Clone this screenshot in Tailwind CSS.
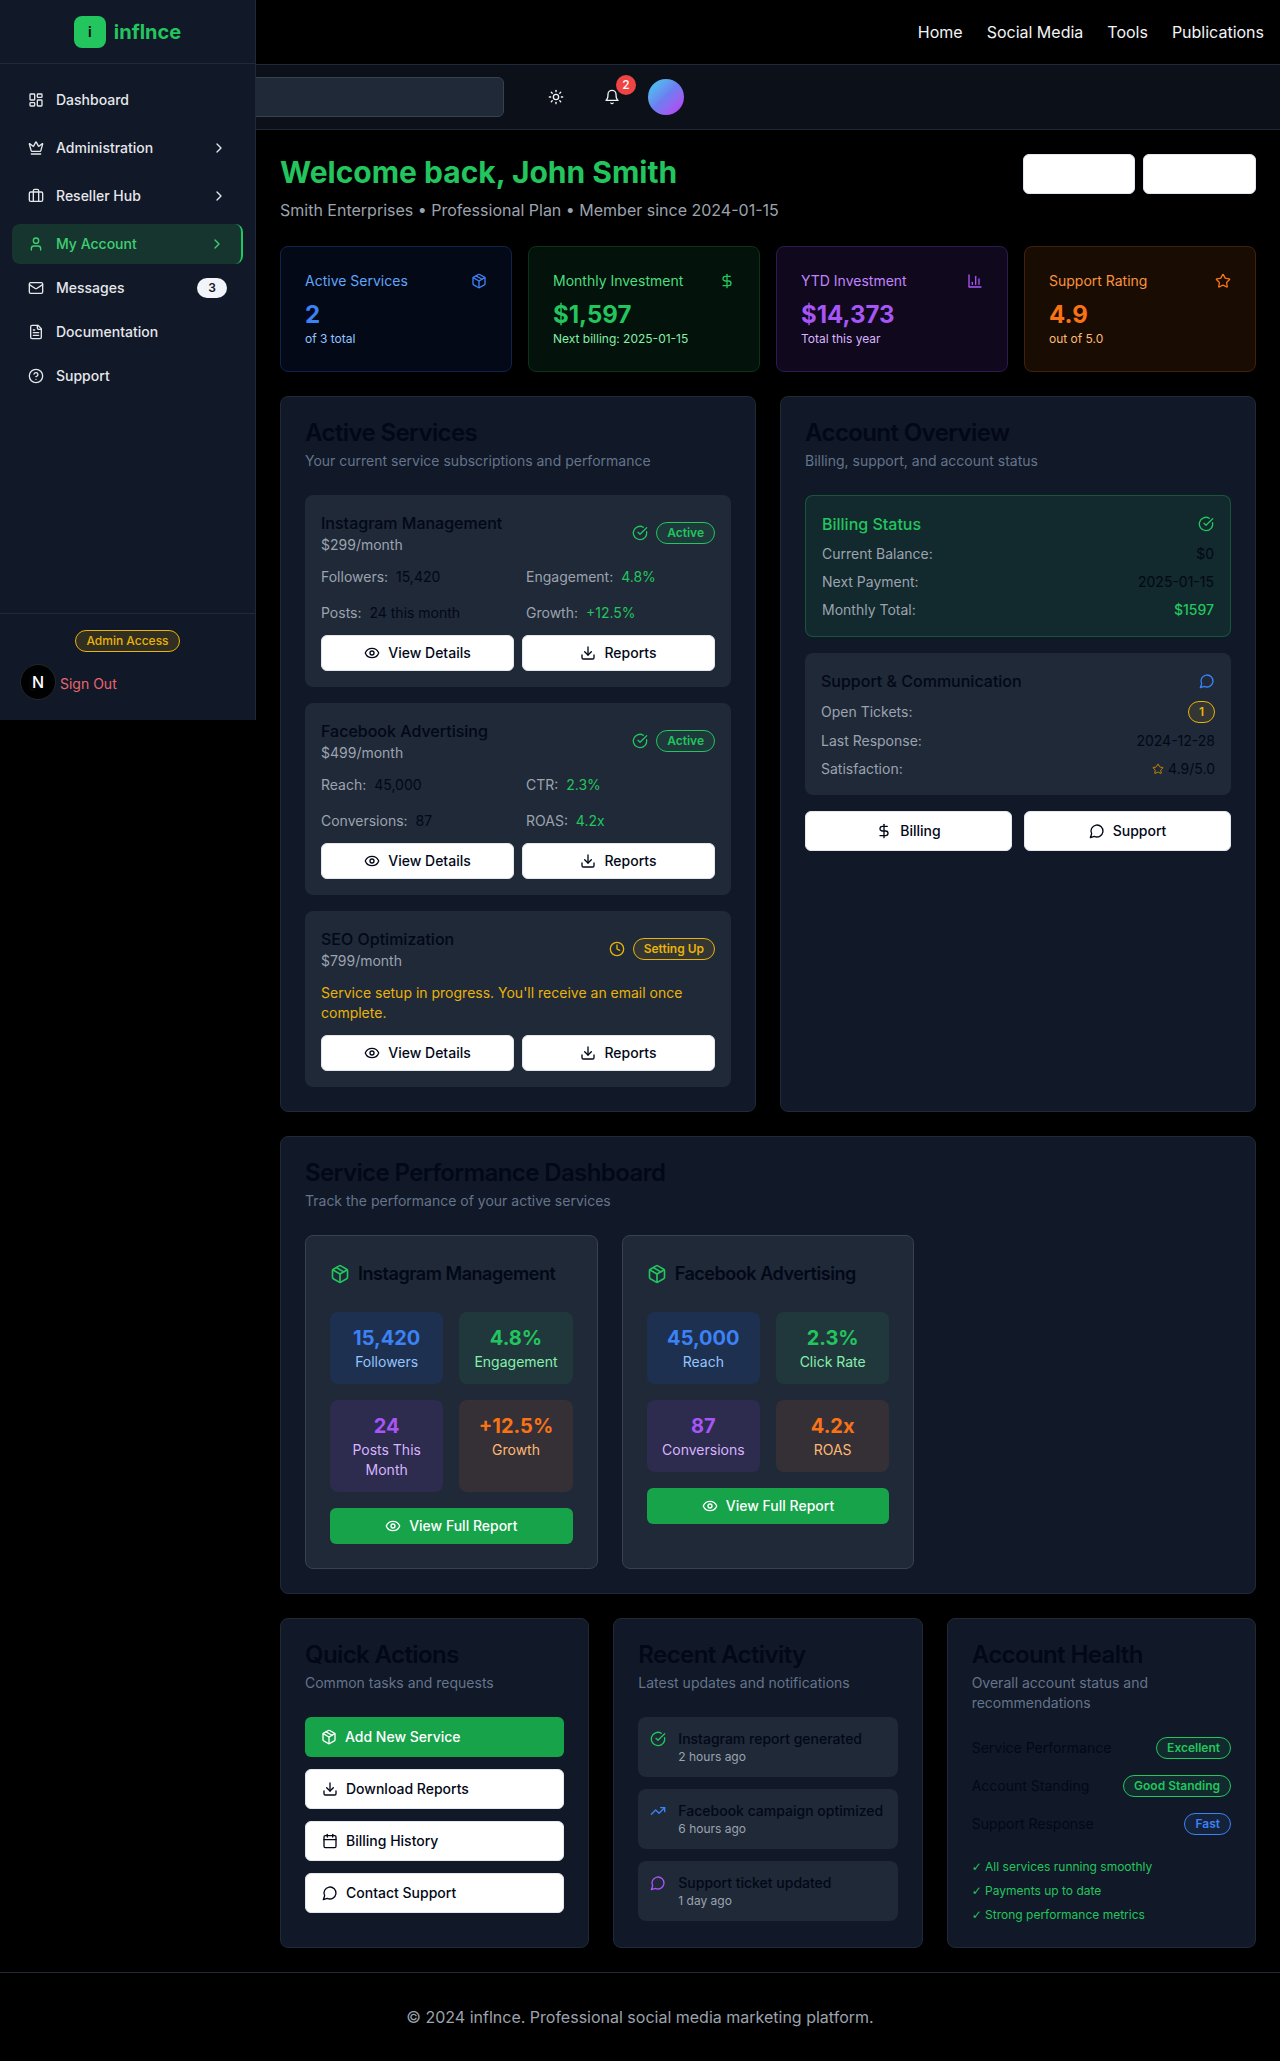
<!DOCTYPE html>
<html lang="en">
<head>
  <meta charset="UTF-8">
  <meta name="viewport" content="width=device-width, initial-scale=1.0">
  <title>inflnce - My Account</title>
  <script src="https://cdn.jsdelivr.net/npm/@tailwindcss/browser@4"></script>
</head>
<body class="bg-black font-['Inter',sans-serif] text-[#f3f4f6] relative min-h-screen">

  <!-- icon sprite -->
  <svg class="hidden" xmlns="http://www.w3.org/2000/svg">
    <symbol id="i-dash" viewBox="0 0 24 24"><rect width="7" height="9" x="3" y="3" rx="1"/><rect width="7" height="5" x="14" y="3" rx="1"/><rect width="7" height="9" x="14" y="12" rx="1"/><rect width="7" height="5" x="3" y="16" rx="1"/></symbol>
    <symbol id="i-crown" viewBox="0 0 24 24"><path d="M11.562 3.266a.5.5 0 0 1 .876 0L15.39 8.87a1 1 0 0 0 1.516.294L21.183 5.5a.5.5 0 0 1 .798.519l-2.834 10.246a1 1 0 0 1-.956.734H5.81a1 1 0 0 1-.957-.734L2.02 6.02a.5.5 0 0 1 .798-.519l4.276 3.664a1 1 0 0 0 1.516-.294z"/><path d="M5 21h14"/></symbol>
    <symbol id="i-case" viewBox="0 0 24 24"><rect width="20" height="14" x="2" y="6" rx="2"/><path d="M16 20V4a2 2 0 0 0-2-2h-4a2 2 0 0 0-2 2v16"/></symbol>
    <symbol id="i-user" viewBox="0 0 24 24"><path d="M19 21v-2a4 4 0 0 0-4-4H9a4 4 0 0 0-4 4v2"/><circle cx="12" cy="7" r="4"/></symbol>
    <symbol id="i-mail" viewBox="0 0 24 24"><rect width="20" height="16" x="2" y="4" rx="2"/><path d="m22 7-8.97 5.7a1.94 1.94 0 0 1-2.06 0L2 7"/></symbol>
    <symbol id="i-file" viewBox="0 0 24 24"><path d="M15 2H6a2 2 0 0 0-2 2v16a2 2 0 0 0 2 2h12a2 2 0 0 0 2-2V7Z"/><path d="M14 2v4a2 2 0 0 0 2 2h4"/><path d="M10 9H8"/><path d="M16 13H8"/><path d="M16 17H8"/></symbol>
    <symbol id="i-help" viewBox="0 0 24 24"><circle cx="12" cy="12" r="10"/><path d="M9.09 9a3 3 0 0 1 5.83 1c0 2-3 3-3 3"/><path d="M12 17h.01"/></symbol>
    <symbol id="i-chev" viewBox="0 0 24 24"><path d="m9 18 6-6-6-6"/></symbol>
    <symbol id="i-sun" viewBox="0 0 24 24"><circle cx="12" cy="12" r="4"/><path d="M12 2v2"/><path d="M12 20v2"/><path d="m4.93 4.93 1.41 1.41"/><path d="m17.66 17.66 1.41 1.41"/><path d="M2 12h2"/><path d="M20 12h2"/><path d="m6.34 17.66-1.41 1.41"/><path d="m19.07 4.93-1.41 1.41"/></symbol>
    <symbol id="i-bell" viewBox="0 0 24 24"><path d="M6 8a6 6 0 0 1 12 0c0 7 3 9 3 9H3s3-2 3-9"/><path d="M10.3 21a1.94 1.94 0 0 0 3.4 0"/></symbol>
    <symbol id="i-pkg" viewBox="0 0 24 24"><path d="m7.5 4.27 9 5.15"/><path d="M21 8a2 2 0 0 0-1-1.73l-7-4a2 2 0 0 0-2 0l-7 4A2 2 0 0 0 3 8v8a2 2 0 0 0 1 1.73l7 4a2 2 0 0 0 2 0l7-4A2 2 0 0 0 21 16Z"/><path d="m3.3 7 8.7 5 8.7-5"/><path d="M12 22V12"/></symbol>
    <symbol id="i-dollar" viewBox="0 0 24 24"><path d="M12 2v20"/><path d="M17 5H9.5a3.5 3.5 0 0 0 0 7h5a3.5 3.5 0 0 1 0 7H6"/></symbol>
    <symbol id="i-bars" viewBox="0 0 24 24"><path d="M3 3v18h18"/><path d="M18 17V9"/><path d="M13 17V5"/><path d="M8 17v-3"/></symbol>
    <symbol id="i-star" viewBox="0 0 24 24"><path d="M11.525 2.295a.53.53 0 0 1 .95 0l2.31 4.679a2.123 2.123 0 0 0 1.595 1.16l5.166.756a.53.53 0 0 1 .294.904l-3.736 3.638a2.123 2.123 0 0 0-.611 1.878l.882 5.14a.53.53 0 0 1-.771.56l-4.618-2.428a2.122 2.122 0 0 0-1.973 0L6.396 21.01a.53.53 0 0 1-.77-.56l.881-5.139a2.122 2.122 0 0 0-.611-1.879L2.16 9.795a.53.53 0 0 1 .294-.906l5.165-.755a2.122 2.122 0 0 0 1.597-1.16z"/></symbol>
    <symbol id="i-check" viewBox="0 0 24 24"><path d="M21.801 10A10 10 0 1 1 17 3.335"/><path d="m9 11 3 3L22 4"/></symbol>
    <symbol id="i-eye" viewBox="0 0 24 24"><path d="M2.062 12.348a1 1 0 0 1 0-.696 10.75 10.75 0 0 1 19.876 0 1 1 0 0 1 0 .696 10.75 10.75 0 0 1-19.876 0"/><circle cx="12" cy="12" r="3"/></symbol>
    <symbol id="i-down" viewBox="0 0 24 24"><path d="M21 15v4a2 2 0 0 1-2 2H5a2 2 0 0 1-2-2v-4"/><path d="m7 10 5 5 5-5"/><path d="M12 15V3"/></symbol>
    <symbol id="i-clock" viewBox="0 0 24 24"><circle cx="12" cy="12" r="10"/><path d="M12 6v6l4 2"/></symbol>
    <symbol id="i-msg" viewBox="0 0 24 24"><path d="M7.9 20A9 9 0 1 0 4 16.1L2 22Z"/></symbol>
    <symbol id="i-cal" viewBox="0 0 24 24"><path d="M8 2v4"/><path d="M16 2v4"/><rect width="18" height="18" x="3" y="4" rx="2"/><path d="M3 10h18"/></symbol>
    <symbol id="i-trend" viewBox="0 0 24 24"><path d="M22 7 13.5 15.5 8.5 10.5 2 17"/><path d="M16 7h6v6"/></symbol>
    <symbol id="i-out" viewBox="0 0 24 24"><path d="M9 21H5a2 2 0 0 1-2-2V5a2 2 0 0 1 2-2h4"/><path d="m16 17 5-5-5-5"/><path d="M21 12H9"/></symbol>
  </svg>

  <!-- Sidebar -->
  <aside class="absolute top-0 left-0 z-20 w-64 h-[720px] bg-[#111827] border-r border-[#1f2937] flex flex-col">
    <div class="h-16 border-b border-[#1f2937] flex items-center justify-center gap-2 shrink-0">
      <div class="w-8 h-8 rounded-lg bg-[#22c55e] flex items-center justify-center text-sm font-semibold text-black">i</div>
      <span class="text-xl font-bold text-[#22c55e]">inflnce</span>
    </div>
    <nav class="flex-1 px-3 pt-4 text-sm font-medium text-[#e5e7eb]">
      <a class="h-10 mb-2 px-4 flex items-center gap-3"><svg class="w-4 h-4 fill-none stroke-current stroke-2 [stroke-linecap:round] [stroke-linejoin:round]"><use href="#i-dash"/></svg>Dashboard</a>
      <a class="h-10 mb-2 px-4 flex items-center gap-3"><svg class="w-4 h-4 fill-none stroke-current stroke-2 [stroke-linecap:round] [stroke-linejoin:round]"><use href="#i-crown"/></svg><span class="flex-1">Administration</span><svg class="w-4 h-4 fill-none stroke-current stroke-2 [stroke-linecap:round] [stroke-linejoin:round]"><use href="#i-chev"/></svg></a>
      <a class="h-10 mb-2 px-4 flex items-center gap-3"><svg class="w-4 h-4 fill-none stroke-current stroke-2 [stroke-linecap:round] [stroke-linejoin:round]"><use href="#i-case"/></svg><span class="flex-1">Reseller Hub</span><svg class="w-4 h-4 fill-none stroke-current stroke-2 [stroke-linecap:round] [stroke-linejoin:round]"><use href="#i-chev"/></svg></a>
      <a class="h-10 mb-1 px-4 flex items-center gap-3 rounded-lg bg-[#17352f] text-[#3ecf72] border-r-2 border-[#22c55e]"><svg class="w-4 h-4 fill-none stroke-current stroke-2 [stroke-linecap:round] [stroke-linejoin:round]"><use href="#i-user"/></svg><span class="flex-1">My Account</span><svg class="w-4 h-4 fill-none stroke-current stroke-2 [stroke-linecap:round] [stroke-linejoin:round]"><use href="#i-chev"/></svg></a>
      <a class="h-10 mb-1 px-4 flex items-center gap-3"><svg class="w-4 h-4 fill-none stroke-current stroke-2 [stroke-linecap:round] [stroke-linejoin:round]"><use href="#i-mail"/></svg><span class="flex-1">Messages</span><span class="h-5 w-[30px] rounded-full bg-[#f1f5f9] text-[#0f172a] text-xs font-semibold flex items-center justify-center">3</span></a>
      <a class="h-10 mb-1 px-4 flex items-center gap-3"><svg class="w-4 h-4 fill-none stroke-current stroke-2 [stroke-linecap:round] [stroke-linejoin:round]"><use href="#i-file"/></svg>Documentation</a>
      <a class="h-10 mb-1 px-4 flex items-center gap-3"><svg class="w-4 h-4 fill-none stroke-current stroke-2 [stroke-linecap:round] [stroke-linejoin:round]"><use href="#i-help"/></svg>Support</a>
    </nav>
    <div class="border-t border-[#1f2937] px-3 pt-4 pb-4">
      <div class="flex justify-center mb-3">
        <span class="h-[22px] px-2.5 rounded-full border border-[#eab308] bg-[#eab308]/15 text-[#eab308] text-xs font-medium flex items-center">Admin Access</span>
      </div>
      <a class="h-10 px-4 flex items-center gap-4 text-sm text-[#e8666f]"><svg class="w-4 h-4 fill-none stroke-current stroke-2 [stroke-linecap:round] [stroke-linejoin:round]"><use href="#i-out"/></svg>Sign Out</a>
    </div>
    <!-- dev indicator sits over the sign out icon -->
    <div class="absolute left-5 bottom-5 w-9 h-9 rounded-full bg-black/95 border border-[#262626] flex items-center justify-center text-white text-base font-medium">N</div>
  </aside>

  <!-- Top nav -->
  <header class="h-[65px] bg-black border-b border-[#1f2937] flex items-center justify-end gap-6 pr-4 text-base text-[#f3f4f6]">
    <a>Home</a><a>Social Media</a><a>Tools</a><a>Publications</a>
  </header>

  <!-- Search bar -->
  <div class="h-[65px] bg-[#0b1019] border-b border-[#1f2937] flex items-center">
    <div class="ml-[120px] w-[384px] h-10 rounded-md bg-[#1f2937] border border-[#374151]"></div>
    <div class="ml-8 w-10 h-10 flex items-center justify-center"><svg class="w-4 h-4 fill-none stroke-current stroke-2 [stroke-linecap:round] [stroke-linejoin:round]"><use href="#i-sun"/></svg></div>
    <div class="ml-4 relative w-10 h-10 flex items-center justify-center">
      <svg class="w-4 h-4 fill-none stroke-current stroke-2 [stroke-linecap:round] [stroke-linejoin:round]"><use href="#i-bell"/></svg>
      <span class="absolute -top-0.5 -right-1 w-5 h-5 rounded-full bg-[#ef4444] text-white text-xs font-medium flex items-center justify-center">2</span>
    </div>
    <div class="ml-4 w-9 h-9 rounded-full bg-gradient-to-br from-[#22d3ee] via-[#6d7cf0] to-[#c026f3]"></div>
  </div>

  <main class="pl-[280px] pr-6 pt-6 pb-6 flex flex-col gap-6">
    <!-- Welcome -->
    <div class="flex justify-between items-start">
      <div>
        <h1 class="text-3xl font-bold text-[#22c55e]">Welcome back, John Smith</h1>
        <p class="mt-2 text-base text-[#9ca3af]">Smith Enterprises • Professional Plan • Member since 2024-01-15</p>
      </div>
      <div class="flex gap-2">
        <button class="w-[112px] h-10 rounded-md bg-white border border-[#e2e8f0]"></button>
        <button class="w-[113px] h-10 rounded-md bg-white border border-[#e2e8f0]"></button>
      </div>
    </div>

    <!-- Stat cards -->
    <div class="grid grid-cols-4 gap-4">
      <div class="rounded-lg border border-[#12234a] bg-[#030917] p-6">
        <div class="flex justify-between items-center mb-2"><span class="text-sm text-[#60a5fa]">Active Services</span><svg class="w-4 h-4 text-[#3b82f6] fill-none stroke-current stroke-2 [stroke-linecap:round] [stroke-linejoin:round]"><use href="#i-pkg"/></svg></div>
        <div class="text-2xl font-bold text-[#3b82f6]">2</div>
        <div class="text-xs text-[#93c5fd]">of 3 total</div>
      </div>
      <div class="rounded-lg border border-[#0b3317] bg-[#03120a] p-6">
        <div class="flex justify-between items-center mb-2"><span class="text-sm text-[#4ade80]">Monthly Investment</span><svg class="w-4 h-4 text-[#22c55e] fill-none stroke-current stroke-2 [stroke-linecap:round] [stroke-linejoin:round]"><use href="#i-dollar"/></svg></div>
        <div class="text-2xl font-bold text-[#22c55e]">$1,597</div>
        <div class="text-xs text-[#86efac]">Next billing: 2025-01-15</div>
      </div>
      <div class="rounded-lg border border-[#2d1a4f] bg-[#10081c] p-6">
        <div class="flex justify-between items-center mb-2"><span class="text-sm text-[#c084fc]">YTD Investment</span><svg class="w-4 h-4 text-[#a855f7] fill-none stroke-current stroke-2 [stroke-linecap:round] [stroke-linejoin:round]"><use href="#i-bars"/></svg></div>
        <div class="text-2xl font-bold text-[#a855f7]">$14,373</div>
        <div class="text-xs text-[#d8b4fe]">Total this year</div>
      </div>
      <div class="rounded-lg border border-[#43200a] bg-[#190d03] p-6">
        <div class="flex justify-between items-center mb-2"><span class="text-sm text-[#fb923c]">Support Rating</span><svg class="w-4 h-4 text-[#f97316] fill-none stroke-current stroke-2 [stroke-linecap:round] [stroke-linejoin:round]"><use href="#i-star"/></svg></div>
        <div class="text-2xl font-bold text-[#f97316]">4.9</div>
        <div class="text-xs text-[#fdba74]">out of 5.0</div>
      </div>
    </div>

    <!-- Services + overview -->
    <div class="grid grid-cols-2 gap-6">
      <section class="rounded-lg border border-[#1f2937] bg-[#111827] p-6">
        <h2 class="text-2xl leading-none font-semibold tracking-tight text-[#020817]">Active Services</h2>
        <p class="mt-1.5 mb-6 text-sm text-[#64748b]">Your current service subscriptions and performance</p>
        <div class="flex flex-col gap-4">
          <div class="rounded-lg bg-[#1f2937] p-4">
            <div class="flex justify-between items-center mb-3">
              <div><h3 class="text-base font-medium text-[#020817]">Instagram Management</h3><p class="text-sm text-[#9ca3af]">$299/month</p></div>
              <div class="flex items-center gap-2"><svg class="w-4 h-4 text-[#22c55e] fill-none stroke-current stroke-2 [stroke-linecap:round] [stroke-linejoin:round]"><use href="#i-check"/></svg><span class="h-[22px] px-2.5 rounded-full border border-[#22c55e] bg-[#22c55e]/10 text-[#22c55e] text-xs font-semibold flex items-center">Active</span></div>
            </div>
            <div class="grid grid-cols-2 gap-4 mb-3 text-sm text-[#9ca3af]">
              <div>Followers: <span class="ml-1 text-[#020817]">15,420</span></div>
              <div>Engagement: <span class="ml-1 text-[#22c55e]">4.8%</span></div>
              <div>Posts: <span class="ml-1 text-[#020817]">24 this month</span></div>
              <div>Growth: <span class="ml-1 text-[#22c55e]">+12.5%</span></div>
            </div>
            <div class="grid grid-cols-2 gap-2 text-sm font-medium text-[#020817]">
              <button class="h-9 rounded-md bg-white border border-[#e2e8f0] flex items-center justify-center gap-2"><svg class="w-4 h-4 fill-none stroke-current stroke-2 [stroke-linecap:round] [stroke-linejoin:round]"><use href="#i-eye"/></svg>View Details</button>
              <button class="h-9 rounded-md bg-white border border-[#e2e8f0] flex items-center justify-center gap-2"><svg class="w-4 h-4 fill-none stroke-current stroke-2 [stroke-linecap:round] [stroke-linejoin:round]"><use href="#i-down"/></svg>Reports</button>
            </div>
          </div>
          <div class="rounded-lg bg-[#1f2937] p-4">
            <div class="flex justify-between items-center mb-3">
              <div><h3 class="text-base font-medium text-[#020817]">Facebook Advertising</h3><p class="text-sm text-[#9ca3af]">$499/month</p></div>
              <div class="flex items-center gap-2"><svg class="w-4 h-4 text-[#22c55e] fill-none stroke-current stroke-2 [stroke-linecap:round] [stroke-linejoin:round]"><use href="#i-check"/></svg><span class="h-[22px] px-2.5 rounded-full border border-[#22c55e] bg-[#22c55e]/10 text-[#22c55e] text-xs font-semibold flex items-center">Active</span></div>
            </div>
            <div class="grid grid-cols-2 gap-4 mb-3 text-sm text-[#9ca3af]">
              <div>Reach: <span class="ml-1 text-[#020817]">45,000</span></div>
              <div>CTR: <span class="ml-1 text-[#22c55e]">2.3%</span></div>
              <div>Conversions: <span class="ml-1 text-[#020817]">87</span></div>
              <div>ROAS: <span class="ml-1 text-[#22c55e]">4.2x</span></div>
            </div>
            <div class="grid grid-cols-2 gap-2 text-sm font-medium text-[#020817]">
              <button class="h-9 rounded-md bg-white border border-[#e2e8f0] flex items-center justify-center gap-2"><svg class="w-4 h-4 fill-none stroke-current stroke-2 [stroke-linecap:round] [stroke-linejoin:round]"><use href="#i-eye"/></svg>View Details</button>
              <button class="h-9 rounded-md bg-white border border-[#e2e8f0] flex items-center justify-center gap-2"><svg class="w-4 h-4 fill-none stroke-current stroke-2 [stroke-linecap:round] [stroke-linejoin:round]"><use href="#i-down"/></svg>Reports</button>
            </div>
          </div>
          <div class="rounded-lg bg-[#1f2937] p-4">
            <div class="flex justify-between items-center mb-3">
              <div><h3 class="text-base font-medium text-[#020817]">SEO Optimization</h3><p class="text-sm text-[#9ca3af]">$799/month</p></div>
              <div class="flex items-center gap-2"><svg class="w-4 h-4 text-[#eab308] fill-none stroke-current stroke-2 [stroke-linecap:round] [stroke-linejoin:round]"><use href="#i-clock"/></svg><span class="h-[22px] px-2.5 rounded-full border border-[#eab308] bg-[#eab308]/10 text-[#eab308] text-xs font-semibold flex items-center">Setting Up</span></div>
            </div>
            <p class="mb-3 text-sm text-[#eab308]">Service setup in progress. You'll receive an email once complete.</p>
            <div class="grid grid-cols-2 gap-2 text-sm font-medium text-[#020817]">
              <button class="h-9 rounded-md bg-white border border-[#e2e8f0] flex items-center justify-center gap-2"><svg class="w-4 h-4 fill-none stroke-current stroke-2 [stroke-linecap:round] [stroke-linejoin:round]"><use href="#i-eye"/></svg>View Details</button>
              <button class="h-9 rounded-md bg-white border border-[#e2e8f0] flex items-center justify-center gap-2"><svg class="w-4 h-4 fill-none stroke-current stroke-2 [stroke-linecap:round] [stroke-linejoin:round]"><use href="#i-down"/></svg>Reports</button>
            </div>
          </div>
        </div>
      </section>

      <section class="rounded-lg border border-[#1f2937] bg-[#111827] p-6">
        <h2 class="text-2xl leading-none font-semibold tracking-tight text-[#020817]">Account Overview</h2>
        <p class="mt-1.5 mb-6 text-sm text-[#64748b]">Billing, support, and account status</p>
        <div class="flex flex-col gap-4">
          <div class="rounded-lg border border-[#22c55e]/30 bg-[#22c55e]/10 p-4">
            <div class="flex justify-between items-center mb-2"><h3 class="text-base font-medium text-[#22c55e]">Billing Status</h3><svg class="w-4 h-4 text-[#22c55e] fill-none stroke-current stroke-2 [stroke-linecap:round] [stroke-linejoin:round]"><use href="#i-check"/></svg></div>
            <div class="flex flex-col gap-2 text-sm text-[#9ca3af]">
              <div class="flex justify-between"><span>Current Balance:</span><span class="text-[#020817]">$0</span></div>
              <div class="flex justify-between"><span>Next Payment:</span><span class="text-[#020817]">2025-01-15</span></div>
              <div class="flex justify-between"><span>Monthly Total:</span><span class="font-medium text-[#22c55e]">$1597</span></div>
            </div>
          </div>
          <div class="rounded-lg bg-[#1f2937] p-4">
            <div class="flex justify-between items-center mb-2"><h3 class="text-base font-medium text-[#020817]">Support &amp; Communication</h3><svg class="w-4 h-4 text-[#3b82f6] fill-none stroke-current stroke-2 [stroke-linecap:round] [stroke-linejoin:round]"><use href="#i-msg"/></svg></div>
            <div class="flex flex-col gap-2 text-sm text-[#9ca3af]">
              <div class="flex justify-between items-center"><span>Open Tickets:</span><span class="h-[22px] px-2.5 rounded-full border border-[#eab308] bg-[#eab308]/10 text-[#eab308] text-xs font-semibold flex items-center">1</span></div>
              <div class="flex justify-between"><span>Last Response:</span><span class="text-[#020817]">2024-12-28</span></div>
              <div class="flex justify-between"><span>Satisfaction:</span><span class="flex items-center gap-1 text-[#020817]"><svg class="w-3 h-3 text-[#ca8a04] fill-none stroke-current stroke-2 [stroke-linecap:round] [stroke-linejoin:round]"><use href="#i-star"/></svg>4.9/5.0</span></div>
            </div>
          </div>
          <div class="grid grid-cols-2 gap-3 text-sm font-medium text-[#020817]">
            <button class="h-10 rounded-md bg-white border border-[#e2e8f0] flex items-center justify-center gap-2"><svg class="w-4 h-4 fill-none stroke-current stroke-2 [stroke-linecap:round] [stroke-linejoin:round]"><use href="#i-dollar"/></svg>Billing</button>
            <button class="h-10 rounded-md bg-white border border-[#e2e8f0] flex items-center justify-center gap-2"><svg class="w-4 h-4 fill-none stroke-current stroke-2 [stroke-linecap:round] [stroke-linejoin:round]"><use href="#i-msg"/></svg>Support</button>
          </div>
        </div>
      </section>
    </div>

    <!-- Performance -->
    <section class="rounded-lg border border-[#1f2937] bg-[#111827] p-6">
      <h2 class="text-2xl leading-none font-semibold tracking-tight text-[#020817]">Service Performance Dashboard</h2>
      <p class="mt-1.5 mb-6 text-sm text-[#64748b]">Track the performance of your active services</p>
      <div class="grid grid-cols-3 gap-6">
        <div class="rounded-lg border border-[#374151] bg-[#1f2937] p-6">
          <h3 class="flex items-center gap-2 mb-6 text-lg font-semibold tracking-tight text-[#020817]"><svg class="w-5 h-5 text-[#22c55e] fill-none stroke-current stroke-2 [stroke-linecap:round] [stroke-linejoin:round]"><use href="#i-pkg"/></svg>Instagram Management</h3>
          <div class="grid grid-cols-2 gap-4 mb-4 text-center">
            <div class="rounded-lg bg-[#1e3050] p-3"><div class="text-xl font-bold text-[#3b82f6]">15,420</div><div class="text-sm text-[#93c5fd]">Followers</div></div>
            <div class="rounded-lg bg-[#20383c] p-3"><div class="text-xl font-bold text-[#22c55e]">4.8%</div><div class="text-sm text-[#86efac]">Engagement</div></div>
            <div class="rounded-lg bg-[#2d2b4e] p-3"><div class="text-xl font-bold text-[#a855f7]">24</div><div class="text-sm text-[#d8b4fe]">Posts This Month</div></div>
            <div class="rounded-lg bg-[#352f36] p-3"><div class="text-xl font-bold text-[#f97316]">+12.5%</div><div class="text-sm text-[#fdba74]">Growth</div></div>
          </div>
          <button class="w-full h-9 rounded-md bg-[#16a34a] text-white text-sm font-medium flex items-center justify-center gap-2"><svg class="w-4 h-4 fill-none stroke-current stroke-2 [stroke-linecap:round] [stroke-linejoin:round]"><use href="#i-eye"/></svg>View Full Report</button>
        </div>
        <div class="rounded-lg border border-[#374151] bg-[#1f2937] p-6">
          <h3 class="flex items-center gap-2 mb-6 text-lg font-semibold tracking-tight text-[#020817]"><svg class="w-5 h-5 text-[#22c55e] fill-none stroke-current stroke-2 [stroke-linecap:round] [stroke-linejoin:round]"><use href="#i-pkg"/></svg>Facebook Advertising</h3>
          <div class="grid grid-cols-2 gap-4 mb-4 text-center">
            <div class="rounded-lg bg-[#1e3050] p-3"><div class="text-xl font-bold text-[#3b82f6]">45,000</div><div class="text-sm text-[#93c5fd]">Reach</div></div>
            <div class="rounded-lg bg-[#20383c] p-3"><div class="text-xl font-bold text-[#22c55e]">2.3%</div><div class="text-sm text-[#86efac]">Click Rate</div></div>
            <div class="rounded-lg bg-[#2d2b4e] p-3"><div class="text-xl font-bold text-[#a855f7]">87</div><div class="text-sm text-[#d8b4fe]">Conversions</div></div>
            <div class="rounded-lg bg-[#352f36] p-3"><div class="text-xl font-bold text-[#f97316]">4.2x</div><div class="text-sm text-[#fdba74]">ROAS</div></div>
          </div>
          <button class="w-full h-9 rounded-md bg-[#16a34a] text-white text-sm font-medium flex items-center justify-center gap-2"><svg class="w-4 h-4 fill-none stroke-current stroke-2 [stroke-linecap:round] [stroke-linejoin:round]"><use href="#i-eye"/></svg>View Full Report</button>
        </div>
      </div>
    </section>

    <!-- Bottom row -->
    <div class="grid grid-cols-3 gap-6">
      <section class="rounded-lg border border-[#1f2937] bg-[#111827] p-6">
        <h2 class="text-2xl leading-none font-semibold tracking-tight text-[#020817]">Quick Actions</h2>
        <p class="mt-1.5 mb-6 text-sm text-[#64748b]">Common tasks and requests</p>
        <div class="flex flex-col gap-3 text-sm font-medium text-[#020817]">
          <button class="h-10 px-4 rounded-md bg-[#16a34a] text-white flex items-center gap-2"><svg class="w-4 h-4 fill-none stroke-current stroke-2 [stroke-linecap:round] [stroke-linejoin:round]"><use href="#i-pkg"/></svg>Add New Service</button>
          <button class="h-10 px-4 rounded-md bg-white border border-[#e2e8f0] flex items-center gap-2"><svg class="w-4 h-4 fill-none stroke-current stroke-2 [stroke-linecap:round] [stroke-linejoin:round]"><use href="#i-down"/></svg>Download Reports</button>
          <button class="h-10 px-4 rounded-md bg-white border border-[#e2e8f0] flex items-center gap-2"><svg class="w-4 h-4 fill-none stroke-current stroke-2 [stroke-linecap:round] [stroke-linejoin:round]"><use href="#i-cal"/></svg>Billing History</button>
          <button class="h-10 px-4 rounded-md bg-white border border-[#e2e8f0] flex items-center gap-2"><svg class="w-4 h-4 fill-none stroke-current stroke-2 [stroke-linecap:round] [stroke-linejoin:round]"><use href="#i-msg"/></svg>Contact Support</button>
        </div>
      </section>
      <section class="rounded-lg border border-[#1f2937] bg-[#111827] p-6">
        <h2 class="text-2xl leading-none font-semibold tracking-tight text-[#020817]">Recent Activity</h2>
        <p class="mt-1.5 mb-6 text-sm text-[#64748b]">Latest updates and notifications</p>
        <div class="flex flex-col gap-3">
          <div class="rounded-lg bg-[#1f2937] p-3 flex gap-3"><svg class="w-4 h-4 mt-0.5 shrink-0 text-[#22c55e] fill-none stroke-current stroke-2 [stroke-linecap:round] [stroke-linejoin:round]"><use href="#i-check"/></svg><div><p class="text-sm font-medium text-[#020817]">Instagram report generated</p><p class="text-xs text-[#9ca3af]">2 hours ago</p></div></div>
          <div class="rounded-lg bg-[#1f2937] p-3 flex gap-3"><svg class="w-4 h-4 mt-0.5 shrink-0 text-[#3b82f6] fill-none stroke-current stroke-2 [stroke-linecap:round] [stroke-linejoin:round]"><use href="#i-trend"/></svg><div><p class="text-sm font-medium text-[#020817]">Facebook campaign optimized</p><p class="text-xs text-[#9ca3af]">6 hours ago</p></div></div>
          <div class="rounded-lg bg-[#1f2937] p-3 flex gap-3"><svg class="w-4 h-4 mt-0.5 shrink-0 text-[#a855f7] fill-none stroke-current stroke-2 [stroke-linecap:round] [stroke-linejoin:round]"><use href="#i-msg"/></svg><div><p class="text-sm font-medium text-[#020817]">Support ticket updated</p><p class="text-xs text-[#9ca3af]">1 day ago</p></div></div>
        </div>
      </section>
      <section class="rounded-lg border border-[#1f2937] bg-[#111827] p-6">
        <h2 class="text-2xl leading-none font-semibold tracking-tight text-[#020817]">Account Health</h2>
        <p class="mt-1.5 mb-6 text-sm text-[#64748b]">Overall account status and recommendations</p>
        <div class="flex flex-col gap-4 text-sm text-[#020817]">
          <div class="flex justify-between items-center"><span>Service Performance</span><span class="h-[22px] px-2.5 rounded-full border border-[#22c55e] bg-[#22c55e]/10 text-[#22c55e] text-xs font-semibold flex items-center">Excellent</span></div>
          <div class="flex justify-between items-center"><span>Account Standing</span><span class="h-[22px] px-2.5 rounded-full border border-[#22c55e] bg-[#22c55e]/10 text-[#22c55e] text-xs font-semibold flex items-center">Good Standing</span></div>
          <div class="flex justify-between items-center"><span>Support Response</span><span class="h-[22px] px-2.5 rounded-full border border-[#3b82f6] bg-[#3b82f6]/10 text-[#3b82f6] text-xs font-semibold flex items-center">Fast</span></div>
        </div>
        <ul class="mt-6 flex flex-col gap-2 text-xs text-[#22c55e]">
          <li><span class="font-['DejaVu_Sans',sans-serif]">✓</span> All services running smoothly</li>
          <li><span class="font-['DejaVu_Sans',sans-serif]">✓</span> Payments up to date</li>
          <li><span class="font-['DejaVu_Sans',sans-serif]">✓</span> Strong performance metrics</li>
        </ul>
      </section>
    </div>
  </main>

  <footer class="border-t border-[#1f2937] py-8 text-center text-base text-[#9ca3af]">© 2024 inflnce. Professional social media marketing platform.</footer>
</body>
</html>
